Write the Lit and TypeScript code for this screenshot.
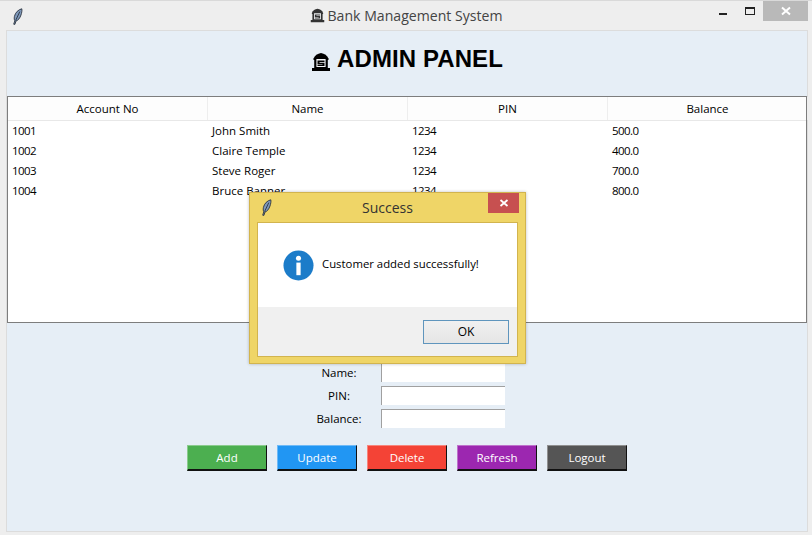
import { LitElement, html, css, svg } from "lit";
import { customElement } from "lit/decorators.js";

const feather = svg`<path d="M10.800 .8 C7.500 1.500 4.200 4.500 3.400 8.500 C3 10.500 3.300 12 3.800 12.800 L2.700 16.200 L3.900 16.400 L5 13 C7.200 12.500 9 10 10 7 C10.700 4.800 11.200 2.500 10.800 .8 Z" fill="#7f99bb" stroke="#1d2530" stroke-width=".8"/><path d="M8.800 3.600 L4.600 12.600" stroke="#1d2530" stroke-width=".8" fill="none"/>`;

const bank = svg`<path d="M10 1 C6.500 1.500 3.800 3.500 2.500 6.500 V8 H17.500 V6.500 C16.200 3.500 13.500 1.500 10 1 Z" fill="currentColor"/><path d="M3.200 8 V16 H16.800 V8 Z" fill="currentColor"/><path d="M5.400 7 H14.600 V15 H5.400 Z" fill="#f2f4f6"/><path d="M6.500 8.500 H13.500 V10 H8.500 V10.800 H13.500 V14 H6.500 V12.500 H11.500 V12 H6.500 Z" fill="currentColor"/><path d="M1 16 H19 V19 H1 Z" fill="currentColor"/>`;

const rows = [
  ["1001", "John Smith", "1234", "500.0"],
  ["1002", "Claire Temple", "1234", "400.0"],
  ["1003", "Steve Roger", "1234", "700.0"],
  ["1004", "Bruce Banner", "1234", "800.0"],
];
const cols = ["Account No", "Name", "PIN", "Balance"];
const fields = ["Account No:", "Name:", "PIN:", "Balance:"];
const buttons = [
  ["Add", "#4caf50"],
  ["Update", "#2196f3"],
  ["Delete", "#f44336"],
  ["Refresh", "#9c27b0"],
  ["Logout", "#555555"],
];

@customElement("app-root")
export class AppRoot extends LitElement {
  static styles = css`
    :host {
      display: block;
      width: 812px;
      height: 535px;
      position: relative;
      overflow: hidden;
      background: #eeeeee;
      font-family: "Open Sans", "Noto Sans", sans-serif;
      font-size: 11.5px;
      color: #000;
    }
    .titlebar {
      height: 31px;
      box-sizing: border-box;
      border-top: 1px solid #d9d9d9;
      display: grid;
      grid-template-columns: 1fr auto 1fr;
      align-items: center;
      color: #444;
    }
    .tb-left { padding-left: 11px; display: flex; align-items: center; }
    .tb-title {
      display: flex;
      align-items: center;
      gap: 3px;
      font-size: 14.1px;
      margin-top: -1px;
    }
    .tb-right { display: flex; justify-content: flex-end; align-self: start; height: 20px; padding-right: 4px; }
    .win-btn { width: 28px; height: 20px; display: flex; align-items: center; justify-content: center; }
    .min i { display: block; width: 8px; height: 2px; background: #222; margin-top: 6px; }
    .max { width: 26px; }
    .max i { display: block; width: 8px; height: 5px; border: 1px solid #222; border-top-width: 2px; }
    .close { width: 45px; background: #b9b9b9; color: #fff; }
    .close svg { display: block; }
    .main {
      margin: 0 5px 0 7px;
      height: 500px;
      background: #e6eef6;
      box-shadow: 0 0 0 1px #dcdcdc;
      display: flex;
      flex-direction: column;
    }
    .heading {
      height: 65px;
      display: flex;
      align-items: center;
      justify-content: center;
      gap: 6px;
      font-family: "Liberation Sans", Arial, sans-serif;
      font-weight: 700;
      font-size: 24px;
      letter-spacing: 0.08px;
      color: #000;
      padding-bottom: 9px;
      box-sizing: border-box;
    }
    .heading svg { margin-top: 5px; }
    .table {
      height: 227px;
      box-sizing: border-box;
      border: 1px solid #7d7d7d;
      background: #fff;
      flex: none;
    }
    .thead, .tr { display: grid; grid-template-columns: repeat(4, 200px); }
    .thead { height: 23px; border-bottom: 1px solid #e8e8e8; background: #fdfdfd; }
    .thead div {
      display: flex;
      align-items: center;
      justify-content: center;
      border-right: 1px solid #eeeeee;
    }
    .tbody { margin-top: -1px; }
    .tr { height: 20px; align-items: center; }
    .tr div { padding-left: 4px; }
    .tr .num { letter-spacing: -0.55px; }
    .form-wrap { padding-top: 17px; padding-left: 297px; display: flex; }
    .form {
      display: grid;
      grid-template-columns: 70px 124px;
      column-gap: 7px;
      row-gap: 4px;
    }
    .lbl { text-align: center; height: 19px; line-height: 19px; white-space: nowrap; }
    .ent {
      height: 19px;
      box-sizing: border-box;
      background: #fff;
      border-top: 1px solid #a0a0a0;
      border-left: 1px solid #a0a0a0;
    }
    .actions {
      margin-top: 17px;
      display: flex;
      gap: 10px;
      padding-left: 180px;
    }
    .btn {
      width: 80px;
      height: 26px;
      box-sizing: border-box;
      display: flex;
      align-items: center;
      justify-content: center;
      color: #fff;
      border-top: 1px solid rgba(255, 255, 255, 0.35);
      border-left: 1px solid rgba(255, 255, 255, 0.35);
      border-right: 1px solid #111;
      border-bottom: 2px solid #111;
    }
    .dialog {
      position: absolute;
      left: 249px;
      top: 192px;
      width: 277px;
      height: 172px;
      box-sizing: border-box;
      background: #efd567;
      border: 1px solid #d2b44e;
      padding: 0 7px 6px 7px;
      display: flex;
      flex-direction: column;
      box-shadow: 0 0 3px rgba(0, 0, 0, 0.25);
    }
    .d-title {
      height: 29px;
      flex: none;
      display: grid;
      grid-template-columns: 1fr auto 1fr;
      align-items: center;
      font-size: 14px;
      color: #333;
    }
    .d-icon { padding-left: 3px; display: flex; }
    .d-close {
      position: absolute;
      right: 6px;
      top: 0;
      width: 31px;
      height: 20px;
      background: #c75050;
      display: flex;
      align-items: center;
      justify-content: center;
    }
    .d-body {
      flex: 1;
      display: flex;
      flex-direction: column;
      background: #fff;
      border: 1px solid #d2b44e;
    }
    .d-msg {
      flex: 1;
      display: flex;
      align-items: center;
      gap: 8px;
      padding-left: 25px;
      font-size: 11.35px;
    }
    .d-msg span { margin-bottom: 3px; }
    .d-foot {
      height: 49px;
      flex: none;
      background: #f0f0f0;
      display: flex;
      justify-content: flex-end;
      padding: 13px 8px 0 0;
      box-sizing: border-box;
    }
    .ok {
      width: 86px;
      height: 24px;
      box-sizing: border-box;
      border: 1px solid #5f95bd;
      background: linear-gradient(#f0f0f0, #e5e5e5);
      display: flex;
      align-items: center;
      justify-content: center;
      font-size: 12px;
      padding-bottom: 2px;
    }
  `;

  render() {
    return html`
      <div class="titlebar">
        <div class="tb-left"><svg width="12" height="17" viewBox="0 0 12 17">${feather}</svg></div>
        <div class="tb-title">
          <svg width="15" height="15" viewBox="0 0 20 20" style="color:#333">${bank}</svg>
          <span>Bank Management System</span>
        </div>
        <div class="tb-right">
          <div class="win-btn min"><i></i></div>
          <div class="win-btn max"><i></i></div>
          <div class="win-btn close">
            <svg width="10" height="10" viewBox="0 0 10 10"><path d="M1 1.500 L9 8.500 M9 1.500 L1 8.500" stroke="#fff" stroke-width="2"/></svg>
          </div>
        </div>
      </div>
      <div class="main">
        <div class="heading">
          <svg width="20" height="20" viewBox="0 0 20 20" style="color:#000">${bank}</svg>
          <span>ADMIN PANEL</span>
        </div>
        <div class="table">
          <div class="thead">${cols.map((c) => html`<div>${c}</div>`)}</div>
          <div class="tbody">
            ${rows.map(
              (r) => html`<div class="tr">${r.map((c, i) => html`<div class=${i === 1 ? "" : "num"}>${c}</div>`)}</div>`,
            )}
          </div>
        </div>
        <div class="form-wrap">
          <div class="form">
            ${fields.map((f) => html`<div class="lbl">${f}</div><div class="ent"></div>`)}
          </div>
        </div>
        <div class="actions">
          ${buttons.map(([t, c]) => html`<div class="btn" style="background:${c}">${t}</div>`)}
        </div>
      </div>
      <div class="dialog">
        <div class="d-title">
          <div class="d-icon"><svg width="12" height="17" viewBox="0 0 12 17">${feather}</svg></div>
          <div>Success</div>
          <div></div>
        </div>
        <div class="d-close">
          <svg width="10" height="10" viewBox="0 0 10 10"><path d="M1.500 2 L8.500 8 M8.500 2 L1.500 8" stroke="#fff" stroke-width="1.800"/></svg>
        </div>
        <div class="d-body">
          <div class="d-msg">
            <svg width="31" height="31" viewBox="0 0 32 32">
              <circle cx="16" cy="16" r="15.500" fill="#1c7cc9"/>
              <circle cx="16" cy="8.500" r="2.600" fill="#fff"/>
              <rect x="13.800" y="13" width="4.400" height="13" fill="#fff"/>
            </svg>
            <span>Customer added successfully!</span>
          </div>
          <div class="d-foot"><div class="ok">OK</div></div>
        </div>
      </div>
    `;
  }
}
